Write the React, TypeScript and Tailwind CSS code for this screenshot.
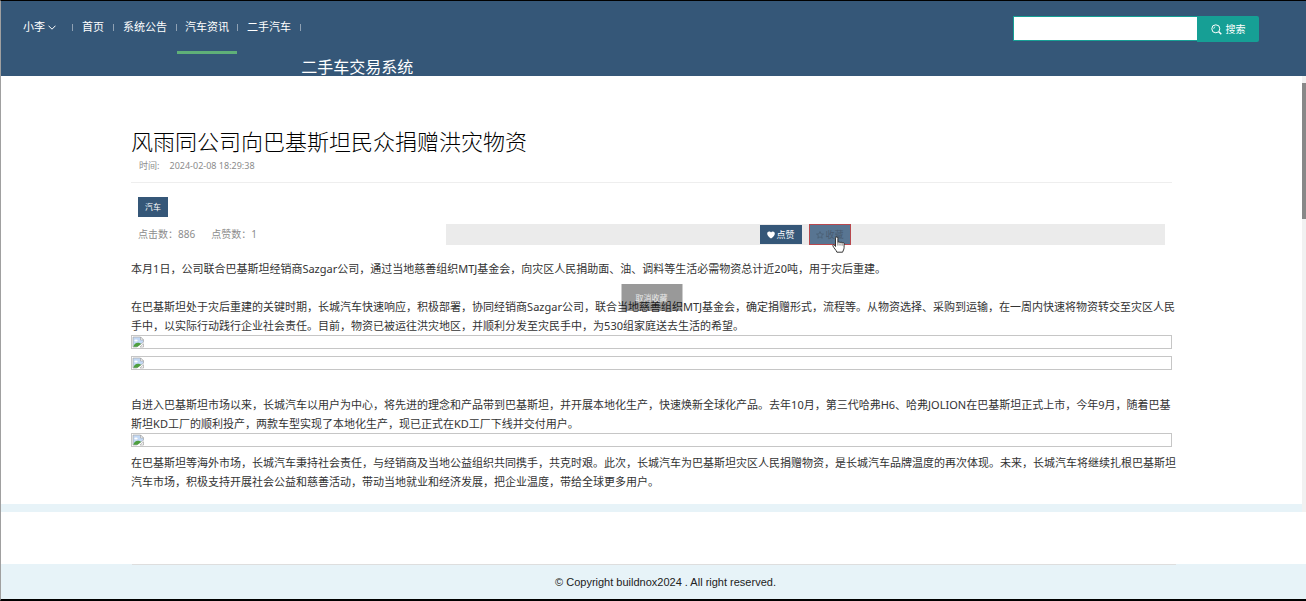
import React, { useState } from "react";

const navItems = ["首页", "系统公告", "汽车资讯", "二手汽车"];

function Divider() {
    return <span className="w-px h-[7px] bg-[#8fa1b3]"></span>
}

function BrokenImage() {
    return (
        <div className="h-[14px] border border-[#c6c6c6] flex items-center">
            <svg width="13" height="12" viewBox="0 0 13 12" aria-hidden="true">
                <path d="M1 1h7.5l3 3v2.2L4.5 11H1z" fill="#c3d9f5" stroke="#a8a8a8" strokeWidth="0.7" />
                <path d="M8.5 1v3h3z" fill="#fff" stroke="#9a9a9a" strokeWidth="0.6" />
                <ellipse cx="4" cy="4.4" rx="1.7" ry="1" fill="#fff" />
                <path d="M1.4 10.8c.6-2.8 2.8-4.400 5.200-4 1.200.2 2 .8 2.400 1.200L5.500 10.800z" fill="#4f9f3f" />
                <path d="M8 11l3.500-3.200V11z" fill="#fff" stroke="#a8a8a8" strokeWidth="0.7" />
            </svg>
        </div>
    )
}

function Header() {
    const [keyword, setKeyword] = useState("");

    return (
        <header className="bg-[#355778] text-white">
            <div className="flex justify-between items-start">
                <nav className="flex items-center h-[53px] pl-[22px] text-[11px]">
                    <button className="flex items-center gap-[3px] mr-4 cursor-pointer">
                        小李
                        <svg width="8" height="5" viewBox="0 0 8 5" fill="none" stroke="currentColor" aria-hidden="true">
                            <path d="M0.5 0.7L4 4.2L7.5 0.7" />
                        </svg>
                    </button>
                    <Divider />
                    <ul className="flex items-center h-full">
                        {navItems.map((item) => (
                            <li key={item} className="flex items-center h-full">
                                <a
                                    href="#"
                                    className={
                                        item === "汽车资讯"
                                            ? "flex items-center h-full px-2 border-y-3 border-t-transparent border-b-[#5fb078]"
                                            : "flex items-center h-full px-[9px]"
                                    }
                                >
                                    {item}
                                </a>
                                <Divider />
                            </li>
                        ))}
                    </ul>
                </nav>
                <form className="flex items-start mt-[15px] mr-[47px]" onSubmit={(e) => e.preventDefault()}>
                    <input
                        type="text"
                        aria-label="搜索"
                        value={keyword}
                        onChange={(e) => setKeyword(e.target.value)}
                        className="w-[184px] h-[25px] px-2 bg-white border border-[#169f95] border-r-0 text-[11px] text-gray-800 outline-none"
                    />
                    <button className="flex items-center justify-center gap-1 w-[62px] h-[26px] bg-[#169f95] rounded-r-xs text-[10px] cursor-pointer">
                        <svg width="11" height="11" viewBox="0 0 11 11" fill="none" stroke="currentColor" aria-hidden="true">
                            <circle cx="4.8" cy="4.8" r="4" />
                            <path d="M2.7 4.8a2.1 2.1 0 0 1 1.5-2" strokeWidth="0.8" />
                            <path d="M7.8 7.8L10.3 10.2" strokeWidth="1.5" />
                        </svg>
                        搜索
                    </button>
                </form>
            </div>
            <div className="pl-[23%] pt-1 text-base leading-[18px]">二手车交易系统</div>
        </header>
    )
}

function Article() {
    return (
        <article className="w-4/5 mx-auto pt-[50px] pb-[13px]">
            <h1 className="text-[22px] leading-[30px] font-light text-black">风雨同公司向巴基斯坦民众捐赠洪灾物资</h1>
            <div className="flex gap-[10px] px-2 pt-1 pb-[10px] text-[9px] leading-3 text-[#8c8c8c] border-b border-[#eee]">
                <span>时间:</span>
                <span>2024-02-08 18:29:38</span>
            </div>
            <div className="px-[7px] pt-[14px]">
                <a href="#" className="flex w-fit items-center h-5 px-[7px] bg-[#355778] text-white text-[8px]">汽车</a>
                <div className="flex items-center mt-[7px]">
                    <div className="w-[30%] flex gap-4 text-[10px] text-[#8c8c8c]">
                        <span>点击数：886</span>
                        <span>点赞数：1</span>
                    </div>
                    <div className="w-[70%] h-[21px] bg-[#ebebeb] flex items-center justify-center gap-[7px] text-[9px]">
                        <button className="flex items-center justify-center gap-px w-[42px] h-[19px] bg-[#355778] text-white cursor-pointer">
                            <svg width="8" height="8" viewBox="0 0 8 8" fill="currentColor" aria-hidden="true">
                                <path d="M4 7.6C2 6 .2 4.6.2 2.7.2 1.400 1.100.5 2.200.5 3 .5 3.700.900 4 1.500 4.300.900 5 .5 5.800.5 6.900.5 7.800 1.400 7.800 2.700 7.800 4.600 6 6 4 7.600z" />
                            </svg>
                            点赞
                        </button>
                        <button className="relative flex items-center justify-center gap-px w-[42px] h-[21px] bg-[#587592] border border-[#b8484e] text-[#485b70] cursor-pointer">
                            <svg width="8" height="8" viewBox="0 0 8 8" fill="none" stroke="currentColor" strokeWidth="0.7" aria-hidden="true">
                                <path d="M4 .6L5 2.900 7.500 3.100 5.600 4.700 6.200 7.200 4 5.900 1.800 7.200 2.400 4.700.5 3.100 3 2.900z" />
                            </svg>
                            收藏
                            <svg className="absolute left-[22px] top-[11px]" width="13" height="17" viewBox="0 0 13 17" aria-hidden="true">
                                <path
                                    d="M3.500 10.500V2.200a1.200 1.200 0 0 1 2.400 0V6.500a1.100 1.100 0 0 1 2.100.3 1.100 1.100 0 0 1 2.100.5 1 1 0 0 1 2 .6V11.500c0 2-1 3-1.500 4.700H4.900C4.200 14 1.900 12.200.9 9.900c-.4-1 .8-1.700 1.500-.9z"
                                    fill="#fff"
                                    stroke="#222"
                                    strokeWidth="0.9"
                                    strokeLinejoin="round"
                                />
                                <path d="M5.900 7v2.500M8 7.300v2.200M10.100 7.800v1.900" stroke="#222" strokeWidth="0.6" />
                            </svg>
                        </button>
                    </div>
                </div>
            </div>
            <div className="mt-[14px] text-[11px] leading-[19px] text-[#333]">
                <p className="-mr-1.5">
                    本月1日，公司联合巴基斯坦经销商Sazgar公司，通过当地慈善组织MTJ基金会，向灾区人民捐助面、油、调料等生活必需物资总计近20吨，用于灾后重建。
                </p>
                <p className="-mr-1.5 mt-[19px]">
                    在巴基斯坦处于灾后重建的关键时期，长城汽车快速响应，积极部署，协同经销商Sazgar公司，联合当地慈善组织MTJ基金会，确定捐赠形式，流程等。从物资选择、采购到运输，在一周内快速将物资转交至灾区人民手中，以实际行动践行企业社会责任。目前，物资已被运往洪灾地区，并顺利分发至灾民手中，为530组家庭送去生活的希望。
                </p>
                <BrokenImage />
                <div className="mt-[7px]">
                    <BrokenImage />
                </div>
                <p className="-mr-1.5 mt-[25px]">
                    自进入巴基斯坦市场以来，长城汽车以用户为中心，将先进的理念和产品带到巴基斯坦，并开展本地化生产，快速焕新全球化产品。去年10月，第三代哈弗H6、哈弗JOLION在巴基斯坦正式上市，今年9月，随着巴基斯坦KD工厂的顺利投产，两款车型实现了本地化生产，现已正式在KD工厂下线并交付用户。
                </p>
                <BrokenImage />
                <p className="-mr-1.5 mt-[6px]">
                    在巴基斯坦等海外市场，长城汽车秉持社会责任，与经销商及当地公益组织共同携手，共克时艰。此次，长城汽车为巴基斯坦灾区人民捐赠物资，是长城汽车品牌温度的再次体现。未来，长城汽车将继续扎根巴基斯坦汽车市场，积极支持开展社会公益和慈善活动，带动当地就业和经济发展，把企业温度，带给全球更多用户。
                </p>
            </div>
        </article>
    )
}

function App() {
    return (
        <div className="min-h-screen bg-white border-l border-l-[#a0a0a0] border-t border-t-black border-b-2 border-b-black font-['Noto_Sans','Noto_Sans_CJK_SC',sans-serif]">
            <Header />
            <div className="flex">
                <main className="relative flex-1 min-w-0 border-b-8 border-[#e7f3f8]">
                    <Article />
                    <div
                        role="status"
                        className="absolute top-52 left-1/2 -translate-x-1/2 flex items-center justify-center w-[61px] h-[27px] bg-black/40 text-white/80 text-[8px]"
                    >
                        取消收藏
                    </div>
                </main>
                <div className="w-1 bg-[#f1f1f1] pt-[7px]">
                    <div className="h-[136px] bg-[#888]"></div>
                </div>
            </div>
            <footer className="mt-[52px] bg-[#e7f3f8]">
                <div className="w-4/5 mx-auto border-t border-[#dedede]"></div>
                <p className="pl-6 text-center text-[11px] leading-[34px] text-[#222] font-['Liberation_Sans',Arial,sans-serif]">
                    © Copyright buildnox2024 . All right reserved.
                </p>
            </footer>
        </div>
    )
}

export default App;
